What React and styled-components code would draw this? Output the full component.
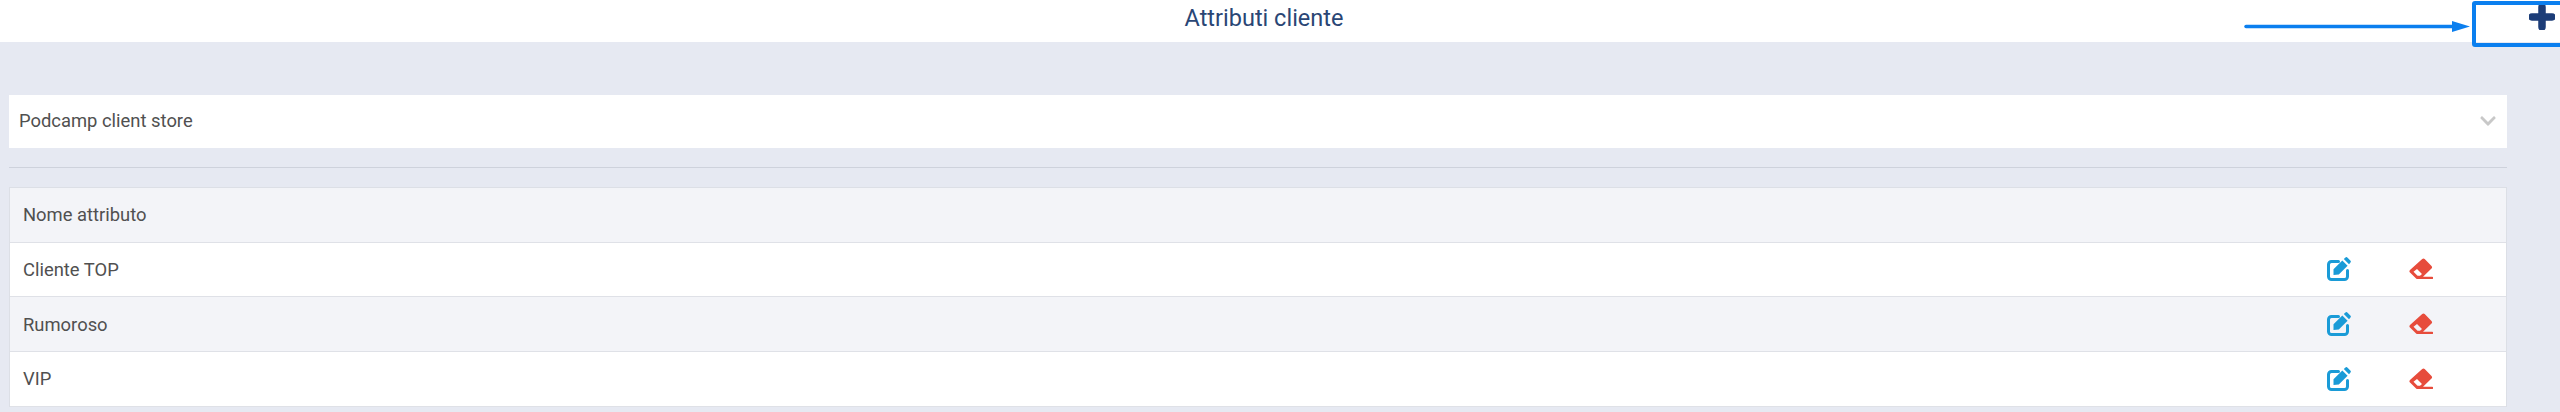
import React from "react";
import styled, { createGlobalStyle } from "styled-components";
import { FaChevronDown } from "react-icons/fa";

const Global = createGlobalStyle`
  html, body { margin: 0; padding: 0; background: #e6e9f2; }
  body { font-family: Roboto, "Liberation Sans", sans-serif; height: 412px; overflow: hidden; }
`;

const Page = styled.div`
  position: relative;
  width: 2560px;
  height: 412px;
  overflow: hidden;
`;

const TopBar = styled.header`
  height: 42px;
  background: #fff;
  display: flex;
  align-items: flex-start;
  justify-content: center;
  position: relative;
`;

const Title = styled.h1`
  margin: 4px 32px 0 0;
  font-size: 23.5px;
  line-height: 28px;
  font-weight: 400;
  color: #2a4675;
`;

const AddIcon = styled.svg`
  position: absolute;
  right: 5px;
  top: 4px;
  color: #1c3d78;
`;

const Callout = styled.div`
  position: absolute;
  left: 2472px;
  top: 1px;
  width: 100px;
  height: 46px;
  box-sizing: border-box;
  border: 4px solid #0b7fef;
  border-radius: 3px;
`;

const Arrow = styled.svg`
  position: absolute;
  left: 2244px;
  top: 19px;
`;

const Content = styled.main`
  padding: 53px 53px 0 9px;
`;

const Select = styled.div`
  height: 53px;
  box-sizing: border-box;
  padding: 0 10px 2px;
  background: #fff;
  display: flex;
  align-items: center;
  justify-content: space-between;
  font-size: 18.4px;
  color: #505050;
`;

const Chevron = styled.span`
  color: #c8c8c8;
  font-size: 18px;
  line-height: 0;
  display: inline-flex;
`;

const Divider = styled.hr`
  margin: 19px 0 19px;
  border: 0;
  border-top: 1px solid #ced2dc;
`;

const Table = styled.div`
  border: 1px solid #dcdfe6;
  border-bottom: 0;
`;

const Row = styled.div`
  height: 53.67px;
  display: grid;
  grid-template-columns: 1fr 82px 97px;
  align-items: center;
  padding-left: 13px;
  font-size: 18.4px;
  color: #505050;
  background: ${(p) => (p.$shaded ? "#f3f4f8" : "#fff")};
  border-bottom: 1px solid #dfe1e7;
`;

const EditIcon = styled.svg`
  color: #1a9bd7;
  display: block;
`;

const EraseIcon = styled.svg`
  color: #e74c3c;
  display: block;
`;

const rows = [
  { name: "Cliente TOP", shaded: false },
  { name: "Rumoroso", shaded: true },
  { name: "VIP", shaded: false },
];

const Edit = () => (
  <EditIcon width="24" height="24" viewBox="0 0 24 24" fill="none">
    <path d="M11.5 4.5H4.5a3 3 0 0 0-3 3v12a3 3 0 0 0 3 3h13a3 3 0 0 0 3-3V13.5" stroke="currentColor" strokeWidth="3" strokeLinecap="round" />
    <path d="M6.5 12.2 15.3 3.4l5.3 5.3-8.8 8.8-5.3.6z" fill="currentColor" />
    <path d="M16.8 2 18.2.7a1.7 1.7 0 0 1 2.4 0l2.7 2.7a1.7 1.7 0 0 1 0 2.4L22 7.2z" fill="currentColor" />
  </EditIcon>
);

const Erase = () => (
  <EraseIcon width="24" height="24" viewBox="0 0 24 24">
    <path
      fillRule="evenodd"
      fill="currentColor"
      d="M13.2 2.1a1.8 1.8 0 0 1 2.5 0l6.8 6.8a1.8 1.8 0 0 1 0 2.5L14 19.7h9a1.1 1.1 0 0 1 0 2.4H8.5a2 2 0 0 1-1.4-.6L1 15.4a1.8 1.8 0 0 1 0-2.5zM8 12l-3.5 2.8 4 4h2.5l2-1.8z"
    />
  </EraseIcon>
);

export default function App() {
  return (
    <Page>
      <Global />
      <TopBar>
        <Title>Attributi cliente</Title>
        <AddIcon width="26" height="26" viewBox="0 0 26 26">
          <path d="M13 3v20M3 13h20" stroke="currentColor" strokeWidth="7.5" strokeLinecap="round" />
        </AddIcon>
      </TopBar>
      <Content>
        <Select>
          Podcamp client store
          <Chevron><FaChevronDown /></Chevron>
        </Select>
        <Divider />
        <Table>
          <Row $shaded>
            <span>Nome attributo</span>
          </Row>
          {rows.map((r) => (
            <Row key={r.name} $shaded={r.shaded}>
              <span>{r.name}</span>
              <Edit />
              <Erase />
            </Row>
          ))}
        </Table>
      </Content>
      <Arrow width="228" height="14" viewBox="0 0 228 14">
        <line x1="2" y1="7.5" x2="210" y2="7.5" stroke="#0b7fef" strokeWidth="3.5" strokeLinecap="round" />
        <polygon points="208,2 226,7.5 208,13" fill="#0b7fef" />
      </Arrow>
      <Callout />
    </Page>
  );
}
